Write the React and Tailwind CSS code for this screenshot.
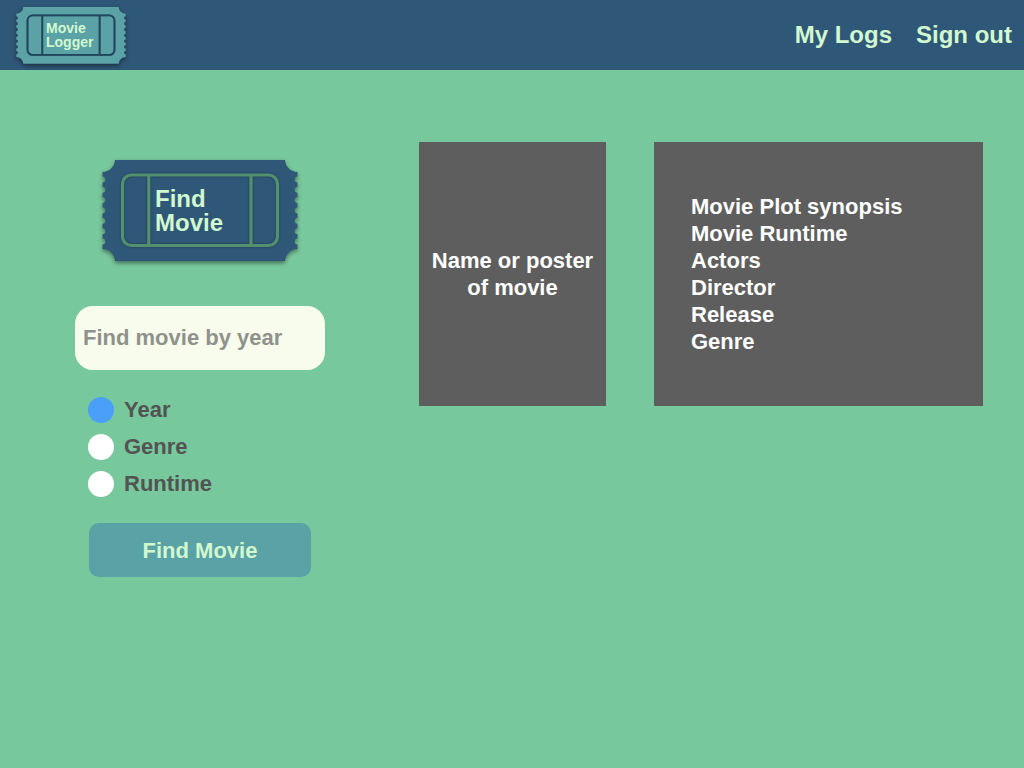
import { useState } from "react";

// Silhouette of a ticket: concave corners and seven small notches on each side.
const TICKET_OUTLINE = (() => {
  const notches = [0, 1, 2, 3, 4, 5, 6];
  const centers = notches.map((i) => 19.4 + i * 10.35);
  const right = centers
    .map((c) => `V${c - 2.9}A2.9 2.9 0 0 0 195.5 ${c + 2.9}`)
    .join("");
  const left = [...centers]
    .reverse()
    .map((c) => `V${c + 2.9}A2.9 2.9 0 0 0 0.5 ${c - 2.9}`)
    .join("");
  return `M13 0H183A12.5 12.5 0 0 0 195.5 12${right}V89A12.5 12.5 0 0 0 183 101H13A12.5 12.5 0 0 0 0.5 89${left}V12A12.5 12.5 0 0 0 13 0Z`;
})();

function Ticket({ className, fillClass, lineClass, textClass, children }) {
  return (
    <span className={`grid items-center ${className}`}>
      <svg
        viewBox="0 0 196 101"
        aria-hidden="true"
        className="col-start-1 row-start-1 w-full overflow-visible drop-shadow-[0_2px_2px_rgba(0,0,0,0.45)]"
      >
        <path d={TICKET_OUTLINE} className={fillClass} />
        <g
          fill="none"
          strokeWidth="3.2"
          className={`drop-shadow-[0_0_1px_rgba(0,0,0,0.35)] ${lineClass}`}
        >
          <rect x="20.5" y="15" width="155" height="70.5" rx="9" />
          <path d="M46.8 15V85.5M149 15V85.5" />
        </g>
      </svg>
      <span className={`relative col-start-1 row-start-1 text-left text-[#d2f8d0] ${textClass}`}>
        {children}
      </span>
    </span>
  );
}

const FILTERS = ["Year", "Genre", "Runtime"];

const DETAILS = [
  "Movie Plot synopsis",
  "Movie Runtime",
  "Actors",
  "Director",
  "Release",
  "Genre",
];

export default function App() {
  const [filter, setFilter] = useState("Year");

  return (
    <div className="min-h-screen bg-[#78c89d] font-['Liberation_Sans',Arial,sans-serif] font-bold">
      <header className="flex h-[70px] items-center justify-between bg-[#2f5777] pr-3 pl-4">
        <a href="#home">
          <Ticket
            className="w-[110px]"
            fillClass="fill-[#5aa2a6]"
            lineClass="stroke-[#20455c]"
            textClass="pl-[30px] text-[14px] leading-[14px]"
          >
            Movie
            <br />
            Logger
          </Ticket>
        </a>
        <nav className="flex gap-6 text-2xl text-[#d2f8d0]">
          <a href="#logs">My Logs</a>
          <a href="#signout">Sign out</a>
        </nav>
      </header>

      <main className="flex flex-col gap-12 px-[41px] py-[72px] text-[22px] leading-[27px] md:flex-row md:items-start">
        <form
          className="flex shrink-0 flex-col items-center pt-[18px] md:mr-[46px] md:ml-[34px]"
          onSubmit={(e) => e.preventDefault()}
        >
          <h1>
            <Ticket
              className="w-[196px]"
              fillClass="fill-[#2f5777]"
              lineClass="stroke-[#52906f]"
              textClass="pl-[53px] text-2xl leading-6"
            >
              Find
              <br />
              Movie
            </Ticket>
          </h1>
          <input
            type="text"
            aria-label="Find movie by year"
            placeholder="Find movie by year"
            className="mt-[45px] h-16 w-[250px] rounded-[18px] bg-[#f8fcec] px-2 text-[#535353] outline-none placeholder:text-[#8f918c] placeholder:opacity-100"
          />
          <fieldset
            aria-label="Search by"
            className="mt-[26px] flex w-[224px] flex-col gap-[10px]"
          >
            {FILTERS.map((name) => (
              <label key={name} className="flex items-center gap-[10px] text-[#535353]">
                <input
                  type="radio"
                  name="filter"
                  value={name}
                  checked={filter === name}
                  onChange={() => setFilter(name)}
                  className="size-[26px] appearance-none rounded-full bg-white checked:bg-[#4a9ff9]"
                />
                {name}
              </label>
            ))}
          </fieldset>
          <button
            type="submit"
            className="mt-[26px] h-[54px] w-[222px] rounded-[10px] bg-[#5aa2a6] text-[#d2f8d0]"
          >
            Find Movie
          </button>
        </form>

        <section className="flex h-[264px] w-[187px] shrink-0 items-center justify-center bg-[#5e5e5e] px-3 text-center text-white">
          <p>
            Name or poster
            <br />
            of movie
          </p>
        </section>

        <section className="flex min-h-[264px] flex-1 items-center bg-[#5e5e5e] px-[37px] text-white">
          <ul>
            {DETAILS.map((item) => (
              <li key={item}>{item}</li>
            ))}
          </ul>
        </section>
      </main>
    </div>
  );
}
